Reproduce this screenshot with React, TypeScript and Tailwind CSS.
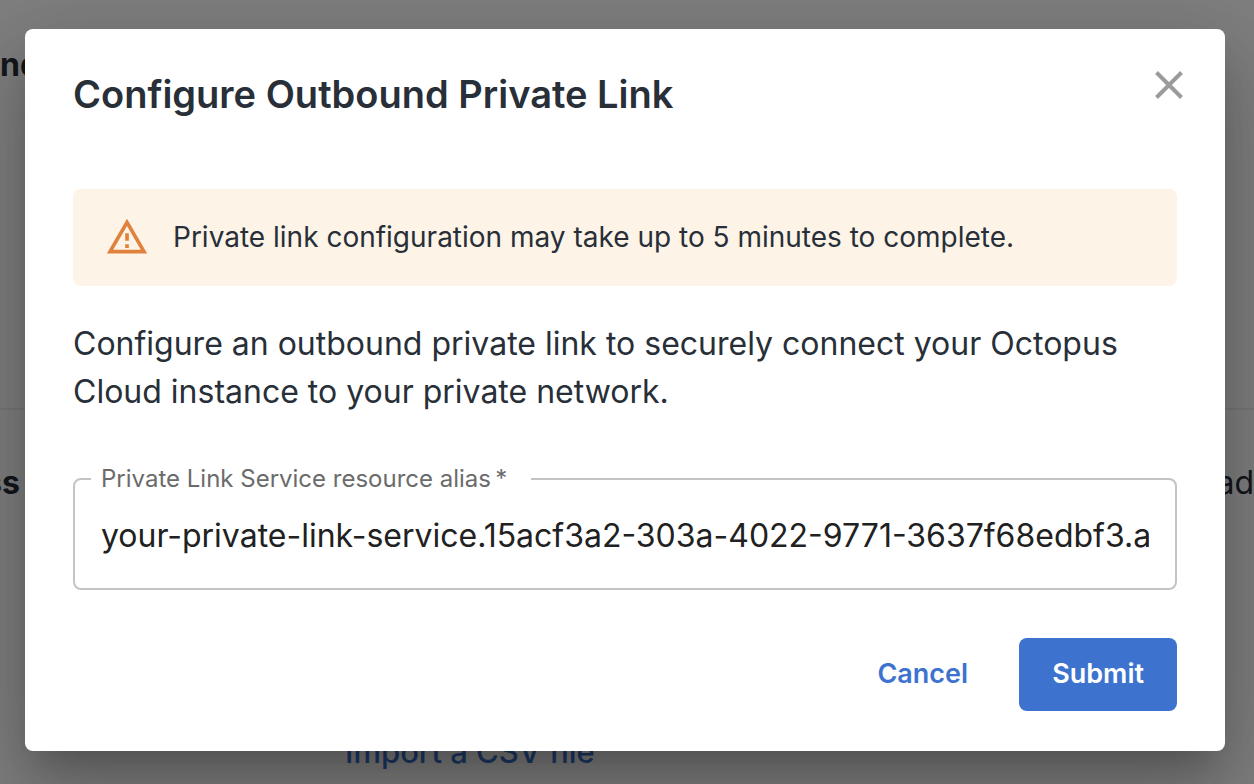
import { useState } from "react";

function WarningIcon() {
  return (
    <svg viewBox="0 0 24 24" className="h-11 w-11 shrink-0 fill-[#e0823d]" aria-hidden="true">
      <path d="M12 5.99 19.53 19H4.47L12 5.99M12 2 1 21h22L12 2zm1 14h-2v2h2v-2zm0-6h-2v4h2v-4z" />
    </svg>
  );
}

function CloseIcon() {
  return (
    <svg
      viewBox="0 0 28 28"
      className="h-7 w-7 stroke-[#9b9b9b]"
      strokeWidth="4"
      fill="none"
      aria-hidden="true"
    >
      <path d="M1.5 1.5 26.5 26.5M26.5 1.5 1.5 26.5" />
    </svg>
  );
}

function SettingsPage() {
  return (
    <main className="text-[32px] leading-10 text-[#282f38]">
      <section className="h-[410px] border-b-2 border-[#efefef] pt-[45px]">
        <h2 className="font-bold">nd</h2>
      </section>
      <section className="h-[304px] pt-[53px]">
        <div className="-ml-4 flex justify-between">
          <h2 className="font-bold">ss</h2>
          <p>ad</p>
        </div>
      </section>
      <section className="pt-[18px] pl-[345px] text-[31px]">
        <a href="#import" className="font-medium text-[#3d73ce]">
          Import a CSV file
        </a>
      </section>
    </main>
  );
}

function PrivateLinkDialog() {
  const [alias, setAlias] = useState(
    "your-private-link-service.15acf3a2-303a-4022-9771-3637f68edbf3.a",
  );

  return (
    <div
      role="dialog"
      aria-modal="true"
      aria-labelledby="dialog-title"
      className="w-full rounded-lg bg-white px-12 pt-10 pb-10 text-[#282f38] shadow-[0_22px_30px_-14px_rgba(0,0,0,0.2),0_48px_76px_6px_rgba(0,0,0,0.14),0_18px_92px_16px_rgba(0,0,0,0.12)]"
    >
      <header className="flex items-start justify-between">
        <h1 id="dialog-title" className="text-[38px] leading-[50px] font-semibold">
          Configure Outbound Private Link
        </h1>
        <button type="button" aria-label="Close" className="-mr-2 p-0.5">
          <CloseIcon />
        </button>
      </header>

      <div className="mt-[70px] flex h-[97px] items-center gap-6 rounded-lg bg-[#fdf4e7] px-8 pb-0.5 text-[28px]">
        <WarningIcon />
        <p>Private link configuration may take up to 5 minutes to complete.</p>
      </div>

      <p className="mt-[34px] text-[32px] leading-12">
        Configure an outbound private link to securely connect your Octopus
        Cloud instance to your private network.
      </p>

      <form onSubmit={(event) => event.preventDefault()}>
        <fieldset className="mt-[47px] rounded-lg border-2 border-[#c4c4c4] px-[26px] pb-[13px]">
          <legend className="-ml-2.5 w-[440px] pl-2.5 text-2xl leading-8 text-[#6b6b6b]">
            <label htmlFor="alias">Private Link Service resource alias&#8201;*</label>
          </legend>
          <input
            id="alias"
            type="text"
            value={alias}
            onChange={(event) => setAlias(event.target.value)}
            className="block h-20 w-full text-[32px] text-[#212121] outline-none"
          />
        </fieldset>

        <footer className="mt-12 flex justify-end gap-[18px] text-[27px] font-semibold">
          <button type="button" className="px-[33px] text-[#3d73ce]">
            Cancel
          </button>
          <button
            type="submit"
            className="h-[73px] rounded-lg bg-[#3d73ce] px-[33px] text-white"
          >
            Submit
          </button>
        </footer>
      </form>
    </div>
  );
}

export default function App() {
  return (
    <div className="relative min-h-screen overflow-hidden bg-white font-['Inter','Liberation_Sans',sans-serif]">
      <SettingsPage />
      <div className="absolute inset-0 flex items-start bg-black/50 pt-[29px] pr-[29px] pl-[25px]">
        <PrivateLinkDialog />
      </div>
    </div>
  );
}
